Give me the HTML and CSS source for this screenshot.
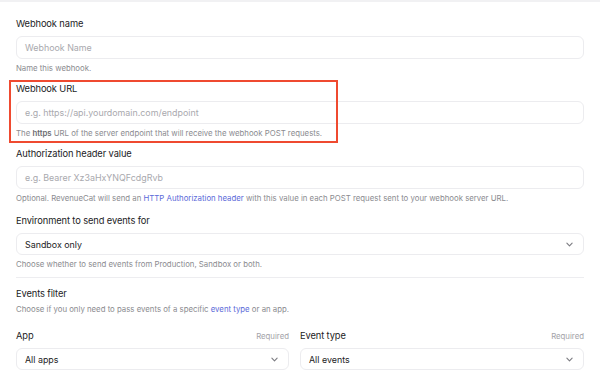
FILE: index.html
```html
<!DOCTYPE html>
<html lang="en">
<head>
  <meta charset="UTF-8" />
  <meta name="viewport" content="width=device-width, initial-scale=1" />
  <title>Webhook settings</title>
  <link rel="stylesheet" href="styles.css">
</head>
<body>
  <div class="page">
    <form class="webhook-form">
      <div class="field">
        <label class="field-label">Webhook name</label>
        <div class="input"><span class="placeholder">Webhook Name</span></div>
        <p class="help">Name this webhook.</p>
      </div>

      <div class="field">
        <label class="field-label">Webhook URL</label>
        <div class="input"><span class="placeholder">e.g. https://api.yourdomain.com/endpoint</span></div>
        <p class="help">The <b>https</b> URL of the server endpoint that will receive the webhook POST requests.</p>
      </div>

      <div class="field">
        <label class="field-label">Authorization header value</label>
        <div class="input"><span class="placeholder">e.g. Bearer Xz3aHxYNQFcdgRvb</span></div>
        <p class="help">Optional. RevenueCat will send an <a href="#">HTTP Authorization header</a> with this value in each POST request sent to your webhook server URL.</p>
      </div>

      <div class="field field-env">
        <label class="field-label">Environment to send events for</label>
        <div class="input select">
          <span>Sandbox only</span>
          <svg class="chevron" viewBox="0 0 8 5" width="7" height="5"><path d="M1 1l3 3 3-3" fill="none" stroke="currentColor" stroke-width="1.3" stroke-linecap="round" stroke-linejoin="round"/></svg>
        </div>
        <p class="help">Choose whether to send events from Production, Sandbox or both.</p>
      </div>

      <hr class="divider">

      <div class="section-head">
        <h3 class="field-label">Events filter</h3>
        <p class="help">Choose if you only need to pass events of a specific <a href="#">event type</a> or an app.</p>
      </div>

      <div class="filter-row">
        <div class="field">
          <div class="label-row">
            <label class="field-label">App</label>
            <span class="required">Required</span>
          </div>
          <div class="input select">
            <span>All apps</span>
            <svg class="chevron" viewBox="0 0 8 5" width="7" height="5"><path d="M1 1l3 3 3-3" fill="none" stroke="currentColor" stroke-width="1.3" stroke-linecap="round" stroke-linejoin="round"/></svg>
          </div>
        </div>
        <div class="field">
          <div class="label-row">
            <label class="field-label">Event type</label>
            <span class="required">Required</span>
          </div>
          <div class="input select">
            <span>All events</span>
            <svg class="chevron" viewBox="0 0 8 5" width="7" height="5"><path d="M1 1l3 3 3-3" fill="none" stroke="currentColor" stroke-width="1.3" stroke-linecap="round" stroke-linejoin="round"/></svg>
          </div>
        </div>
      </div>
    </form>

    <!-- annotation box over the URL field -->
    <div class="highlight"></div>
  </div>
</body>
</html>
```

FILE: styles.css
```css
* {
  box-sizing: border-box;
  margin: 0;
  padding: 0;
}

html, body {
  background: #fff;
  font-family: Inter, "Noto Sans", sans-serif;
  color: #1c1c1e;
}

.page {
  position: relative;
  width: 600px;
  height: 375px;
  overflow: hidden;
  border-top: 2px solid #f1f1f3;
}

.webhook-form {
  display: flex;
  flex-direction: column;
  padding: 14px 16px 0 16px;
}

.field {
  display: flex;
  flex-direction: column;
  margin-bottom: 7px;
}

.field-env {
  margin-top: 2px;
}

.field-label {
  font-size: 9.3px;
  font-weight: 400;
  letter-spacing: -0.1px;
  line-height: 16px;
  color: #1c1c1e;
  margin-bottom: 4px;
}

.input {
  display: flex;
  align-items: center;
  height: 23px;
  padding: 0 10px 0 8px;
  border: 1px solid #ececef;
  border-radius: 6px;
  font-size: 8.9px;
}

.placeholder {
  color: #a9a9ae;
}

.select {
  justify-content: space-between;
  height: 22px;
  color: #1c1c1e;
}

.chevron {
  color: #7c7c82;
}

.help {
  font-size: 7.8px;
  line-height: 12px;
  color: #8b8b90;
  margin-top: 3px;
}

.help b {
  font-weight: 600;
  color: #6c6c70;
}

.help a {
  color: #5b6ad9;
  text-decoration: none;
}

.divider {
  border: none;
  border-top: 1px solid #ededf0;
  margin: 0 0 8px 0;
}

.section-head {
  display: flex;
  flex-direction: column;
  margin-bottom: 13px;
}

.section-head .field-label {
  margin-bottom: 0;
}

.section-head .help {
  margin-top: 1px;
}

.filter-row {
  display: grid;
  grid-template-columns: 273fr 284fr;
  column-gap: 11px;
}

.label-row {
  display: flex;
  justify-content: space-between;
  align-items: baseline;
}

.required {
  font-size: 7.8px;
  color: #a3a3a8;
}

.highlight {
  position: absolute;
  left: 9px;
  top: 78px;
  width: 329px;
  height: 63px;
  border: 2px solid #ef4a30;
  pointer-events: none;
}
```
